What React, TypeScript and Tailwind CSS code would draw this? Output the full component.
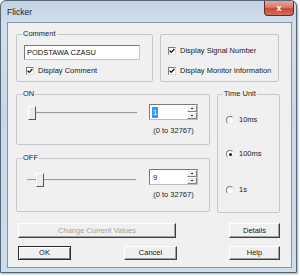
import React from "react";

function Check({ label, className = "" }: { label: string; className?: string }) {
  return (
    <div className={`flex items-center h-[10px] ${className}`}>
      <div className="w-[8px] h-[8px] border border-t-[#7c7c7c] border-l-[#7c7c7c] border-b-[#dcdcdc] border-r-[#dcdcdc] bg-white flex items-center justify-center">
        <svg width="6" height="6" viewBox="0 0 6 6">
          <path d="M0.6 2.6 L2.2 4.4 L5.4 1" stroke="#111" strokeWidth="1.3" fill="none" />
        </svg>
      </div>
      <span className="ml-[4px] text-[7.5px] leading-[10px] text-[#1a1a1a] whitespace-nowrap">{label}</span>
    </div>
  );
}

function Radio({ label, checked, className = "" }: { label: string; checked?: boolean; className?: string }) {
  return (
    <div className={`flex items-center h-[10px] ${className}`}>
      <div className="w-[8px] h-[8px] rounded-full border border-t-[#808080] border-l-[#808080] border-b-[#e6e6e6] border-r-[#e6e6e6] bg-white flex items-center justify-center">
        {checked && <div className="w-[3px] h-[3px] rounded-full bg-[#111]" />}
      </div>
      <span className="ml-[5px] text-[7.5px] leading-[10px] text-[#1a1a1a]">{label}</span>
    </div>
  );
}

function Group({ label, className = "", inner = "", children }: { label?: string; className?: string; inner?: string; children?: React.ReactNode }) {
  return (
    <fieldset className={`border border-[#c4c8cc] rounded-[2px] ${className}`}>
      {label ? (
        <legend className="ml-[5px] px-[1px] text-[7.5px] leading-[10px] text-[#1a1a1a]">{label}</legend>
      ) : null}
      <div className={inner}>{children}</div>
    </fieldset>
  );
}

function Slider({ thumb, className = "" }: { thumb: string; className?: string }) {
  return (
    <div className={`relative h-[14px] ${className}`}>
      <div className="absolute left-0 right-0 top-[6px] h-[2px] bg-[#9a9a9a] border-b border-b-[#e8e8e8]" />
      <div
        className={`absolute top-0 h-[14px] w-[8px] bg-[#ececec] border border-t-white border-l-white border-r-[#555] border-b-[#555] ${thumb}`}
      />
    </div>
  );
}

function Spin({ value, selected, className = "" }: { value: string; selected?: boolean; className?: string }) {
  return (
    <div className={`w-[49px] h-[16px] bg-white border border-t-[#7a7a7a] border-l-[#7a7a7a] border-r-[#bdbdbd] border-b-[#bdbdbd] flex ${className}`}>
      <div className="flex-1 flex items-center pl-[2px]">
        <span
          className={`text-[7.5px] leading-[11px] px-[1px] ${selected ? "bg-[#3399ff] text-white" : "text-[#111]"}`}
        >
          {value}
        </span>
      </div>
      <div className="w-[10px] flex flex-col">
        <div className="flex-1 bg-[#f0f0f0] border border-t-white border-l-white border-r-[#808080] border-b-[#808080] flex items-center justify-center">
          <div className="w-[2px] h-[1px] bg-[#222]" />
        </div>
        <div className="flex-1 bg-[#f0f0f0] border border-t-white border-l-white border-r-[#808080] border-b-[#808080] flex items-center justify-center">
          <div className="w-[2px] h-[1px] bg-[#222]" />
        </div>
      </div>
    </div>
  );
}

function Btn({
  children,
  className = "",
  disabled,
  isDefault,
}: {
  children: React.ReactNode;
  className?: string;
  disabled?: boolean;
  isDefault?: boolean;
}) {
  return (
    <div
      className={`bg-[#f0f0f0] flex items-center justify-center text-[7.5px] leading-[10px] border ${
        isDefault
          ? "border-[#2a2a2a] shadow-[inset_1px_1px_0_#ffffff,inset_-1px_-1px_0_#808080]"
          : "border-t-white border-l-white border-r-[#404040] border-b-[#404040] shadow-[inset_-1px_-1px_0_#a0a0a0]"
      } ${disabled ? "text-[#a3a3a3]" : "text-[#1a1a1a]"} ${className}`}
    >
      {children}
    </div>
  );
}

export default function App() {
  return (
    <div className="w-[300px] h-[276px] bg-white font-['Liberation_Sans',Arial,sans-serif]">
      <div className="w-[297px] h-[273px] rounded-t-[6px] border border-[#56687e] bg-[linear-gradient(180deg,#c5d4e4_0%,#d3dfeb_10%,#c9d7e6_40%,#cfdcea_100%)] flex flex-col shadow-[1px_1px_2px_rgba(0,0,0,0.35)]">
        <div className="h-[20px] flex items-start">
          <span className="ml-[6px] mt-[6px] text-[8.5px] leading-[11px] text-[#222]">Flicker</span>
          <div className="ml-auto mr-[2px] w-[30px] h-[15px] rounded-b-[4px] border border-[#6b2a22] border-t-0 bg-[linear-gradient(180deg,#e9a797_0%,#d8796a_45%,#c44a36_55%,#d4705d_100%)] flex items-center justify-center">
            <span className="text-white text-[9px] leading-[10px] font-bold">x</span>
          </div>
        </div>
        <div className="ml-[6px] mr-[4px] mt-px h-[246px] border border-[#8195ab] bg-[#f0f0f0] flex flex-col pl-[8px] pt-[6px]">
          {/* Row 1 */}
          <div className="flex items-start">
            <Group label="Comment" className="w-[137px] h-[53px]" inner="px-[7px] pt-[6px]">
              <div className="w-[116px] h-[15px] bg-white border border-t-[#7a7a7a] border-l-[#7a7a7a] border-r-[#c4c4c4] border-b-[#c4c4c4] flex items-center pl-[2px]">
                <span className="text-[7.5px] leading-[10px] text-[#111]">PODSTAWA CZASU</span>
              </div>
              <Check label="Display Comment" className="ml-[2px] mt-[6px]" />
            </Group>
            <Group className="ml-[7px] mt-[5px] w-[119px] h-[48px]" inner="pl-[7px] pt-[11px]">
              <Check label="Display Signal Number" />
              <Check label="Display Monitor Information" className="mt-[10px]" />
            </Group>
          </div>
          {/* Row 2 */}
          <div className="flex mt-[7px]">
            <div className="flex flex-col">
              <Group label="ON" className="w-[194px] h-[56px]" inner="pl-[11px]">
                <div className="flex items-start">
                  <Slider thumb="left-0" className="w-[109px] mt-[7px]" />
                  <div className="ml-[12px] mt-[5px] flex flex-col items-center">
                    <Spin value="1" selected />
                    <span className="mt-[6px] text-[7.5px] leading-[10px] text-[#1a1a1a]">(0 to 32767)</span>
                  </div>
                </div>
              </Group>
              <Group label="OFF" className="mt-[8px] w-[194px] h-[59px]" inner="pl-[10px]">
                <div className="flex items-start">
                  <Slider thumb="left-[9px]" className="w-[109px] mt-[10px]" />
                  <div className="ml-[13px] mt-[6px] flex flex-col items-center">
                    <Spin value="9" />
                    <span className="mt-[5px] text-[7.5px] leading-[10px] text-[#1a1a1a]">(0 to 32767)</span>
                  </div>
                </div>
              </Group>
            </div>
            <Group label="Time Unit" className="ml-[7px] w-[63px] h-[124px]" inner="pl-[8px] pt-[16px]">
              <Radio label="10ms" />
              <Radio label="100ms" checked className="mt-[24px]" />
              <Radio label="1s" className="mt-[26px]" />
            </Group>
          </div>
          {/* Row 3 */}
          <div className="flex mt-[10px] pl-[2px]">
            <Btn disabled className="w-[158px] h-[15px]">Change Current Values</Btn>
            <Btn className="ml-[53px] w-[51px] h-[15px]">Details</Btn>
          </div>
          {/* Row 4 */}
          <div className="flex mt-[8px] pl-[2px]">
            <Btn isDefault className="w-[53px] h-[14px]">OK</Btn>
            <Btn className="ml-[53px] w-[53px] h-[14px]">Cancel</Btn>
            <Btn className="ml-[52px] w-[51px] h-[14px]">Help</Btn>
          </div>
        </div>
      </div>
    </div>
  );
}
